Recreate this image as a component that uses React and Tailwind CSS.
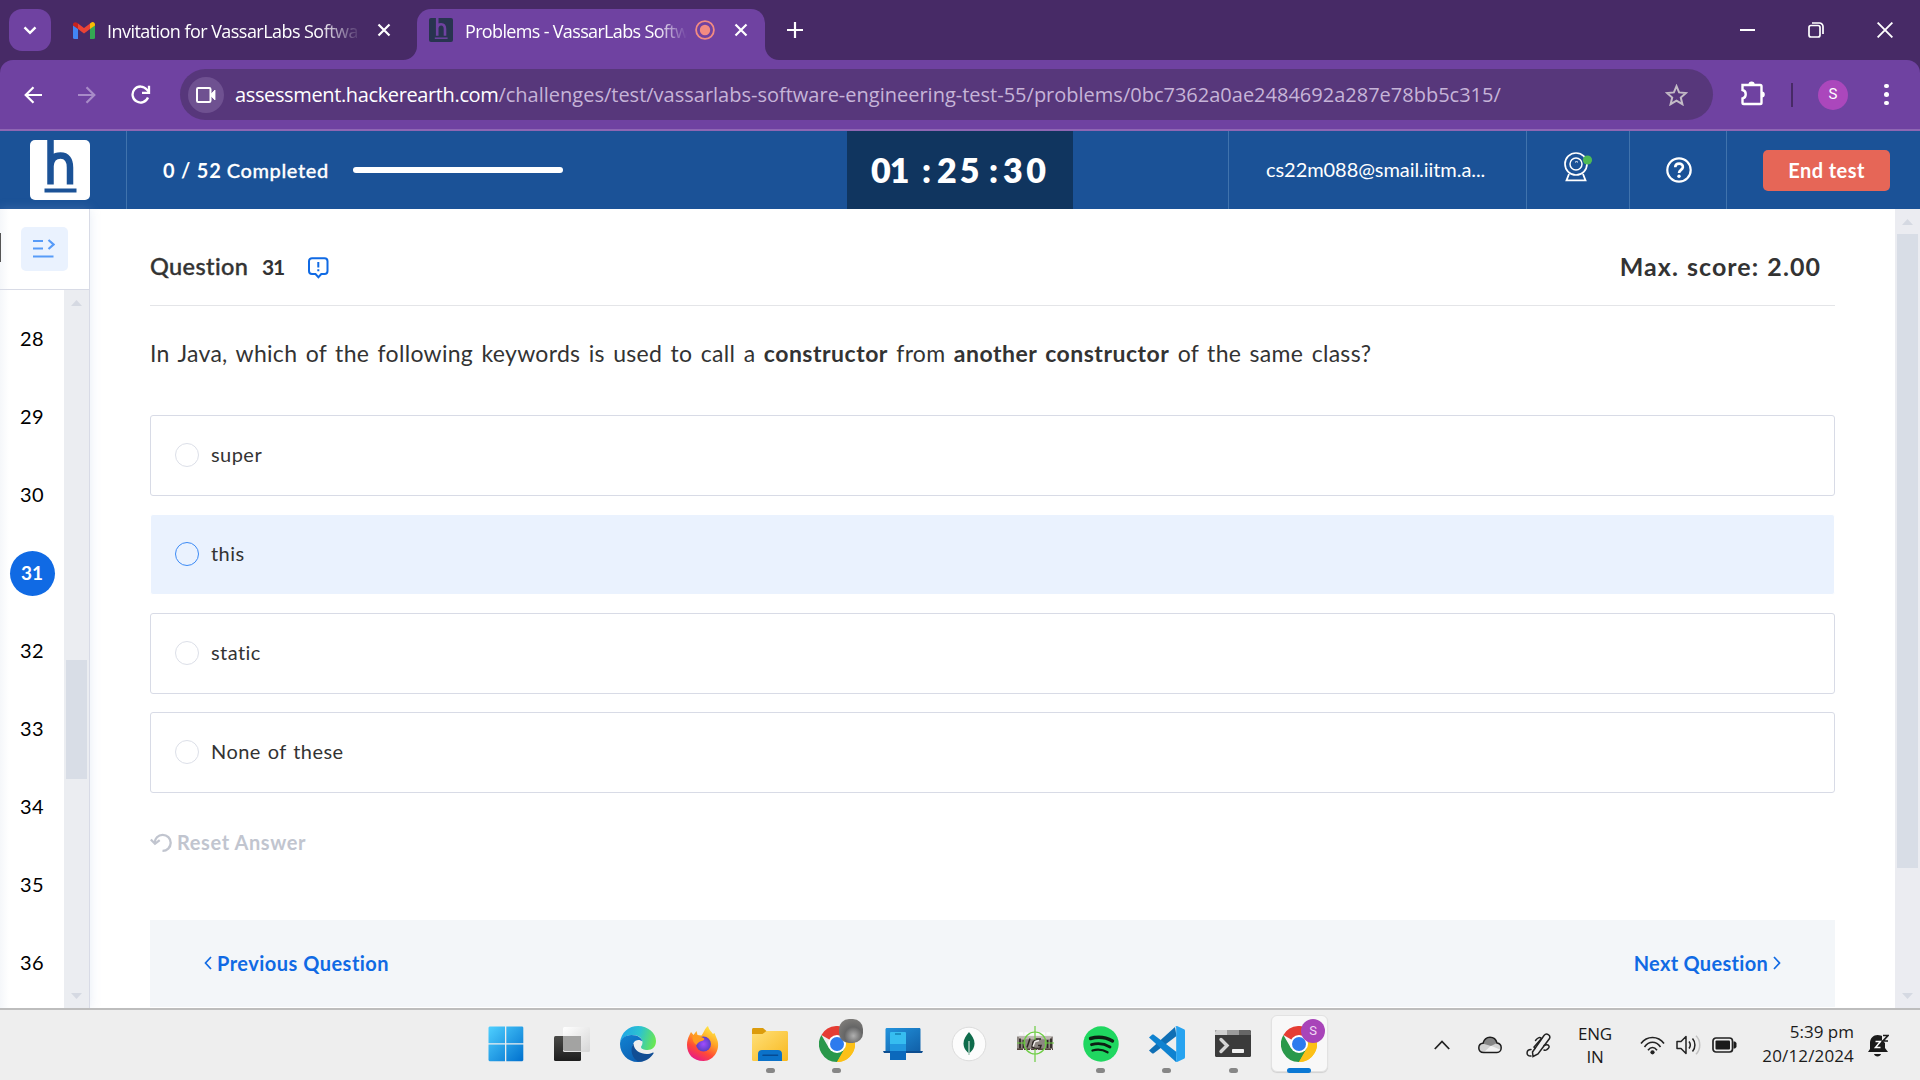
import React from "react";

/* ---------- browser chrome ---------- */

const GmailIcon = () => (
  <svg width="22" height="17" viewBox="0 0 22 17">
    <path d="M0 3 5 6.5V17H1.5A1.5 1.5 0 0 1 0 15.500Z" fill="#4285f4" />
    <path d="M22 3 17 6.500V17h3.500a1.500 1.500 0 0 0 1.500-1.500Z" fill="#34a853" />
    <path d="M17 1.500v5.500l5-3.500V2.500c0-2.200-2.400-3.200-4-1.800Z" fill="#fbbc04" />
    <path d="M5 7V1.500l6 4.500 6-4.500V7l-6 4.500Z" fill="#ea4335" />
    <path d="M0 2.500V3.500L5 7V1.500L4 .7C2.400-.5 0 .3 0 2.500Z" fill="#c5221f" />
  </svg>
);

const CloseIcon = ({ className }) => (
  <svg className={className} width="14" height="14" viewBox="0 0 14 14" stroke="#fff" strokeWidth="2.2">
    <path d="M1.500 1.500l11 11M12.500 1.500l-11 11" />
  </svg>
);

const HLogo = ({ w, h, bg, fg }) => (
  <svg width={w} height={h} viewBox="0 0 60 60" preserveAspectRatio="none">
    <rect width="60" height="60" rx="5" fill={bg} />
    <path d="M20.500 0v44.500M20.500 26C21 18 25 15.500 30.500 15.500c6.500 0 9.500 4.500 9.500 12v17" fill="none" stroke={fg} strokeWidth="6.500" />
    <path d="M14.500 50.500h32" stroke={fg} strokeWidth="3.800" />
  </svg>
);

function TabStrip() {
  return (
    <div className="flex h-[60px] bg-[#472a66]">
      <div className="ml-[9px] mt-[9px] flex h-[42px] w-[42px] items-center justify-center rounded-[13px] bg-[#6f42a1]">
        <svg width="14" height="9" viewBox="0 0 14 9" fill="none" stroke="#fff" strokeWidth="2.400"><path d="M1.500 1.300 7 6.800l5.500-5.500" /></svg>
      </div>
      <div className="ml-[22px] flex w-[319px] items-center">
        <GmailIcon />
        <span className="ml-[12px] w-[252px] overflow-hidden whitespace-nowrap pt-[3px] text-[18px] tracking-[-0.55px] text-white [mask-image:linear-gradient(to_right,#000_84%,transparent_101%)]">Invitation for VassarLabs Softwa</span>
        <CloseIcon className="ml-[18px]" />
      </div>
      <div className="relative ml-[25px] mt-[9px] flex h-[51px] w-[348px] items-center rounded-t-[14px] bg-[#6f42a1] pb-[9px] pl-[12px]">
        <svg className="absolute bottom-0 -left-[14px]" width="14" height="14" viewBox="0 0 14 14"><path d="M14 0v14H0A14 14 0 0 0 14 0Z" fill="#6f42a1" /></svg>
        <svg className="absolute bottom-0 -right-[14px]" width="14" height="14" viewBox="0 0 14 14"><path d="M0 0v14h14A14 14 0 0 1 0 0Z" fill="#6f42a1" /></svg>
        <HLogo w={24} h={24} bg="#28344f" fg="#6f42a1" />
        <span className="ml-[12px] w-[222px] overflow-hidden whitespace-nowrap pt-[3px] text-[18px] tracking-[-0.66px] text-white [mask-image:linear-gradient(to_right,#000_86%,transparent_100%)]">Problems - VassarLabs Softw</span>
        <svg className="ml-[8px] shrink-0" width="20" height="20" viewBox="0 0 20 20"><circle cx="10" cy="10" r="8.900" fill="none" stroke="#f28b82" strokeWidth="1.800" /><circle cx="10" cy="10" r="5.200" fill="#f28b82" /></svg>
        <CloseIcon className="ml-[19px] shrink-0" />
      </div>
      <svg className="ml-[22px] mt-[22px]" width="16" height="16" viewBox="0 0 16 16" stroke="#fff" strokeWidth="2.200"><path d="M8 0v16M0 8h16" /></svg>
      <div className="ml-auto mr-[27px] flex items-center">
        <svg width="15" height="2" viewBox="0 0 15 2"><path d="M0 1h15" stroke="#fff" strokeWidth="2" /></svg>
        <svg className="ml-[53px]" width="16" height="16" viewBox="0 0 16 16" fill="none" stroke="#fff" strokeWidth="1.700"><rect x="1" y="3.500" width="11" height="11.500" rx="2" /><path d="M4 1h7.500A3.500 3.500 0 0 1 15 4.500V12" /></svg>
        <svg className="ml-[53px]" width="16" height="16" viewBox="0 0 16 16" stroke="#fff" strokeWidth="1.900"><path d="M.6.600l14.800 14.800M15.400.600.6 15.400" /></svg>
      </div>
    </div>
  );
}

function Toolbar() {
  return (
    <div className="bg-[#472a66]">
      <div className="flex h-[71px] items-center rounded-t-[13px] border-b-2 border-[#8e66b3] bg-[#6f42a1] text-white">
        <svg className="ml-[24px]" width="18" height="18" viewBox="0 0 18 18" fill="none" stroke="#fff" strokeWidth="2.200"><path d="M18 9H2M9.500 1.200 1.700 9l7.800 7.800" /></svg>
        <svg className="ml-[36px]" width="18" height="18" viewBox="0 0 18 18" fill="none" stroke="#a88bc8" strokeWidth="2.200"><path d="M0 9h16M8.500 1.200 16.300 9l-7.800 7.800" /></svg>
        <svg className="ml-[35px]" width="20" height="20" viewBox="0 0 20 20" fill="none" stroke="#fff" strokeWidth="2.300"><path d="M17 12.500A8 8 0 1 1 15.800 4.500L18 7" /><path d="M18 .8V7.800h-7" /></svg>
        <div className="ml-[29px] flex h-[51px] w-[1533px] items-center rounded-full bg-[#57377b] pl-[8px] pr-[25px]">
          <div className="flex h-[36px] w-[36px] items-center justify-center rounded-full bg-[#6f5191]">
            <svg width="20" height="16" viewBox="0 0 20 16"><rect x="1" y="1" width="13.500" height="14" rx="1.200" fill="none" stroke="#fff" strokeWidth="2" /><path d="M14 8 19 3v10Z" fill="#fff" stroke="#fff" strokeWidth=".8" /></svg>
          </div>
          <div className="ml-[11px] flex whitespace-nowrap text-[20px]">
            <span className="tracking-[-0.37px]">assessment.hackerearth.com</span>
            <span className="text-[#c6b4d8]">/challenges/test/vassarlabs-software-engineering-test-55/problems/0bc7362a0ae2484692a287e78bb5c315/</span>
          </div>
          <svg className="ml-auto" width="23" height="22" viewBox="0 0 23 22" fill="none" stroke="#c3bbc6" strokeWidth="2"><path d="M11.500 2.200l2.600 6.200 6.900.6-5.200 4.500 1.600 6.700-5.900-3.600-5.900 3.600 1.600-6.700L2 9l6.900-.6Z" /></svg>
        </div>
        <svg className="mb-[3px] ml-[27px]" width="27" height="26" viewBox="0 0 27 26"><path d="M2.500 5h17.700c.8 0 1.300.5 1.300 1.300v16.400c0 .8-.5 1.300-1.300 1.300H3.800c-.8 0-1.300-.5-1.300-1.300v-4.300c4.300-.8 4.300-7.600 0-8.400Z" fill="none" stroke="#fff" strokeWidth="2.400" /><path d="M8.500 4.500a3.100 3.100 0 0 1 6.200 0ZM21.800 11.500a3 3 0 0 1 0 6Z" fill="#fff" /></svg>
        <div className="ml-[24px] h-[24px] w-[2px] bg-[#472a66]" />
        <div className="ml-[25px] flex h-[30px] w-[30px] items-center justify-center rounded-full bg-[#ab47bc] font-[Roboto] text-[15px]">S</div>
        <div className="ml-[36px] flex flex-col gap-[4px]">
          <i className="h-[4.500px] w-[5px] rounded-full bg-white" />
          <i className="h-[4.500px] w-[5px] rounded-full bg-white" />
          <i className="h-[4.500px] w-[5px] rounded-full bg-white" />
        </div>
      </div>
    </div>
  );
}

/* ---------- assessment page ---------- */

function TestHeader() {
  return (
    <header className="flex h-[78px] shrink-0 items-stretch bg-[#1b5297] font-[Lato,sans-serif] text-white">
      <div className="flex w-[127px] items-start border-r border-[#4073ad] pl-[30px] pt-[9px]"><HLogo w={60} h={60} bg="#fff" fg="#1b5297" /></div>
      <div className="flex w-[720px] items-center pl-[36px] text-[20px]">
        <span className="w-[166px] whitespace-nowrap pb-[1px]"><span className="font-bold tracking-[0.8px]">0 / 52</span> <span className="font-medium tracking-[0.6px] [-webkit-text-stroke:0.3px_white]">Completed</span></span>
        <div className="ml-[24px] h-[6px] w-[210px] rounded-full bg-white" />
      </div>
      <div className="flex w-[226px] items-center bg-[#10355f] pb-[2px] pl-[24px] text-[34px] font-extrabold">
        <span className="w-[51px] tracking-[-1px]">01</span>
        <span className="w-[15px]">:</span>
        <span className="w-[52px] tracking-[3px]">25</span>
        <span className="w-[14px]">:</span>
        <span className="tracking-[3.500px]">30</span>
      </div>
      <div className="w-[156px] border-r border-[#4073ad]" />
      <div className="flex w-[298px] items-center border-r border-[#4073ad] pb-[3px] pl-[37px] text-[20px] tracking-[-0.06px]">cs22m088@smail.iitm.a...</div>
      <div className="flex w-[103px] items-start border-r border-[#4073ad] pl-[36px] pt-[20px]">
        <svg width="30" height="32" viewBox="0 0 30 32" fill="none" stroke="#fff">
          <circle cx="13" cy="13" r="11" strokeWidth="1.700" /><circle cx="13" cy="13" r="6" strokeWidth="1.500" />
          <path d="M12 11.200q1.600-1.200 3 0" strokeWidth="1" />
          <path d="M6 23 3.500 29.300h19L20 23" strokeWidth="1.800" />
          <circle cx="24.500" cy="9" r="4.600" fill="#4fba55" stroke="none" />
        </svg>
      </div>
      <div className="flex w-[97px] items-center border-r border-[#4073ad] pl-[36px]">
        <svg width="26" height="26" viewBox="0 0 26 26" fill="none" stroke="#fff"><circle cx="13" cy="13" r="11.700" strokeWidth="2.200" /><path d="M9.200 10.300c.2-5 7.900-4.700 7.700-.2-.2 2.800-3.700 2.800-3.900 5.900" strokeWidth="2.600" /><circle cx="13" cy="19.300" r="1.700" fill="#fff" stroke="none" /></svg>
      </div>
      <div className="flex items-center pl-[36px]">
        <div className="flex h-[41px] w-[127px] items-center justify-center rounded-[5px] bg-[#e66657] text-[20px] font-bold tracking-[0.45px]">End test</div>
      </div>
    </header>
  );
}

const Tri = ({ down }) => (
  <svg width="11" height="6" viewBox="0 0 11 6"><path d={down ? "M0 0h11L5.500 6Z" : "M0 6h11L5.500 0Z"} fill="#d5d9e2" /></svg>
);

function Rail() {
  return (
    <aside className="flex w-[90px] shrink-0 flex-col border-r border-[#d8dbe6] bg-white bg-[linear-gradient(to_right,#f5f7fa,#fff_9px)] shadow-[0_0_10px_rgba(160,185,220,0.250)]">
      <div className="flex h-[81px] items-start border-b border-[#d8dbe6]">
        <div className="mt-[24px] h-[29px] w-[1px] bg-[#555]" />
        <div className="ml-[20px] mt-[18px] flex h-[44px] w-[47px] items-center rounded-[5px] bg-[#eaf2fe] pb-[2px] pl-[12px]">
          <svg width="22" height="20" viewBox="0 0 22 20" fill="none" stroke="#579bf8" strokeWidth="2.200"><path d="M0 3h10M0 10.500h10M0 18.500h20.500M15.500 2l5 4.500-5 4.500" /></svg>
        </div>
      </div>
      <div className="flex min-h-0 flex-1 overflow-hidden">
        <div className="flex w-[64px] flex-col items-center pt-[10px] font-[Lato,sans-serif] text-[20px] text-black">
          {[28, 29, 30, 31, 32, 33, 34, 35, 36].map((n) => (
            <div key={n} className="flex h-[78px] shrink-0 items-center">
              {n === 31 ? (
                <div className="flex h-[45px] w-[45px] items-center justify-center rounded-full bg-[#106ae4] text-[19px] font-bold text-white">31</div>
              ) : (
                <span className="pb-[2px] tracking-[0.5px]">{n}</span>
              )}
            </div>
          ))}
        </div>
        <div className="flex w-[25px] flex-col items-center bg-[#ebedf1] pb-[9px] pt-[10px]">
          <Tri />
          <div className="mt-[354px] h-[119px] w-[21px] bg-[#d8dde6]" />
          <div className="mt-auto"><Tri down /></div>
        </div>
      </div>
    </aside>
  );
}

const OPTIONS = ["super", "this", "static", "None of these"];

function Question() {
  return (
    <main className="flex min-w-0 flex-1 flex-col pl-[60px] pr-[60px] font-[Lato,sans-serif] text-[#333]">
      <div className="flex h-[97px] items-center border-b border-[#e4e5e8] pt-[20px]">
        <span className="w-[112px] pb-[1px] text-[23.500px] font-medium tracking-[0.4px] [-webkit-text-stroke:0.4px_#333]">Question</span>
        <span className="w-[46px] pb-[1px] text-[21px] font-bold tracking-[-1.200px]">31</span>
        <svg className="mt-[1px]" width="21" height="22" viewBox="0 0 21 22" fill="none" stroke="#106ae4" strokeWidth="2"><path d="M4 1.200h12.500a3 3 0 0 1 3 3V14a3 3 0 0 1-3 3h-3.200l-2.900 3.200L7.500 17H4a3 3 0 0 1-3-3V4.200a3 3 0 0 1 3-3Z" /><path d="M10.300 5v5.500M10.300 12.300v2" /></svg>
        <span className="ml-auto mr-[14px] pb-[1px] text-[25px] font-bold tracking-[1.050px] [word-spacing:1px]">Max. score: 2.00</span>
      </div>
      <p className="mt-[29px] h-[36px] whitespace-nowrap text-[23px] leading-[36px] tracking-[0.3px] [word-spacing:2.200px]">
        In Java, which of the following keywords is used to call a <b className="tracking-[0.5px]">constructor</b> from <b className="tracking-[0.5px]">another constructor</b> of the same class?
      </p>
      <div className="mt-[44px] flex flex-col gap-[18px]">
        {OPTIONS.map((o) => (
          <div key={o} className={o === "this" ? "flex h-[81px] items-center rounded-[3px] border border-white bg-[#eaf2fe] pb-[2px] pl-[24px]" : "flex h-[81px] items-center rounded-[3px] border border-[#d8dbe6] bg-white pb-[2px] pl-[24px]"}>
            <i className={o === "this" ? "h-[24px] w-[24px] rounded-full border border-[#3b8af5]" : "h-[24px] w-[24px] rounded-full border border-[#dcdfe8]"} />
            <span className="ml-[12px] pb-[1px] text-[20px] tracking-[0.450px] [word-spacing:1.300px]">{o}</span>
          </div>
        ))}
      </div>
      <div className="mt-[33px] flex h-[32px] items-center text-[20px] font-bold tracking-[0.6px] text-[#c1c5cf]">
        <svg width="22" height="19" viewBox="0 0 22 19" fill="none" stroke="#c1c5cf" strokeWidth="2.300"><path d="M4.700 10A8 8 0 1 1 12.500 17.800" /><path d="M.8 6.500 5 10.800l4.700-3.600" /></svg>
        <span className="ml-[5px] pb-[1px]">Reset Answer</span>
      </div>
      <div className="mb-[1px] mt-[62px] flex flex-1 items-center justify-between bg-[#f3f6f9] px-[54px] pb-[2px] text-[20px] font-bold text-[#106ae4]">
        <span className="flex items-center gap-[5px] tracking-[0.48px]"><svg width="8" height="14" viewBox="0 0 8 14" fill="none" stroke="#106ae4" strokeWidth="1.700"><path d="M7 1 1.500 7 7 13" /></svg>Previous Question</span>
        <span className="flex items-center gap-[5px] tracking-[0.3px]">Next Question<svg width="8" height="14" viewBox="0 0 8 14" fill="none" stroke="#106ae4" strokeWidth="1.700"><path d="m1 1 5.500 6L1 13" /></svg></span>
      </div>
    </main>
  );
}

function PageScrollbar() {
  return (
    <div className="flex w-[25px] flex-col items-center bg-[#ebecf1] pb-[9px] pt-[10px]">
      <Tri />
      <div className="mt-[9px] h-[634px] w-[21px] bg-[#d8dde6]" />
      <div className="mt-auto"><Tri down /></div>
    </div>
  );
}

/* ---------- taskbar ---------- */

const WindowsIcon = () => (
  <svg width="36" height="36" viewBox="0 0 36 36">
    <defs><linearGradient id="win" x1="0" y1="0" x2="1" y2="1"><stop offset="0" stopColor="#4fd0ff" /><stop offset="1" stopColor="#0070ce" /></linearGradient></defs>
    <path d="M1.500.500H17v16.800H.500V1.500ZM18.300.500H34.500l.8 1v15.800h-17ZM.500 18.500H17V35.300H1.500l-1-1ZM18.300 18.500h17v15.800l-1 1h-16Z" fill="url(#win)" />
  </svg>
);

const TaskViewIcon = () => (
  <svg width="36" height="36" viewBox="0 0 36 36">
    <defs>
      <linearGradient id="tv1" x1="0" y1="0" x2="0" y2="1"><stop offset="0" stopColor="#4a4a48" /><stop offset="1" stopColor="#1d1d1d" /></linearGradient>
      <linearGradient id="tv2" x1="0" y1="0" x2="1" y2="1"><stop offset="0" stopColor="#fff" /><stop offset="1" stopColor="#d6d6d6" /></linearGradient>
    </defs>
    <rect x="0" y="10" width="27" height="25" rx="1.500" fill="url(#tv1)" />
    <rect x="9" y="1" width="27" height="25" rx="1.500" fill="url(#tv2)" />
    <path d="M9 10h18v15H10.500L9 24Z" fill="#a3a3a2" />
  </svg>
);

const EdgeIcon = () => (
  <svg width="36" height="36" viewBox="0 0 36 36">
    <defs>
      <linearGradient id="ed1" x1="0" y1="0.400" x2="1" y2="0.600"><stop offset="0" stopColor="#1fa5e8" /><stop offset=".5" stopColor="#2cc3d0" /><stop offset="1" stopColor="#6be84f" /></linearGradient>
      <linearGradient id="ed2" x1="0" y1="0" x2="0.600" y2="1"><stop offset="0" stopColor="#1283d2" /><stop offset="1" stopColor="#0c60b3" /></linearGradient>
    </defs>
    <path d="M0 17C1 6 9 0 18 0c10 0 18 7 18 15 0 6-4 9-8.500 9-4 0-6.500-1.400-6.500-3 0-1 1.500-1.800 1.500-4.500C22.500 12 18.500 9 12.500 9 6 9 1.500 12.500 0 17Z" fill="url(#ed1)" />
    <path d="M0 18c0-5 5-9 11.500-9C18.500 9 22.300 12.500 22.300 15.500c-2-2-7-2.500-9 2C11 23 14 32 24 34.800 21 36 19 36 17.500 36 8 36 0 28 0 18Z" fill="url(#ed2)" />
    <path d="M13.500 17.500C9.500 22.500 11.500 34 20 35.800c5.500-.3 11-4 13.500-8.300.4-.8-.3-1.200-1-.8C27 29.500 14 28 13.500 17.500Z" fill="#114d94" />
  </svg>
);

const FirefoxIcon = () => (
  <svg width="36" height="36" viewBox="0 0 36 36">
    <defs>
      <linearGradient id="ff1" x1="0.800" y1="0" x2="0.300" y2="1"><stop offset="0" stopColor="#fff04a" /><stop offset=".4" stopColor="#ffa324" /><stop offset=".7" stopColor="#ff4a36" /><stop offset="1" stopColor="#e6178c" /></linearGradient>
      <radialGradient id="ff2"><stop offset="0" stopColor="#a04cff" /><stop offset="1" stopColor="#5b3fc4" /></radialGradient>
    </defs>
    <path d="M3.500 9 5 6l2.500 3 3-4 1 4 4 .5c2-2 3-7 6.500-9.500 1 4 3 5 5 8l1.500-1 2 5c5 10-2 23-13 23C7 35 1 28 1 19c0-4 1-7 2.500-10Z" fill="url(#ff1)" />
    <circle cx="17.500" cy="18" r="7.500" fill="url(#ff2)" />
    <path d="M6.500 9.500c4-1.500 7 1 11 2.500 1.500.8 1 2.500-2 3-3 .5-4 2.500-5 4-3-2-4.500-5-4-9.500Z" fill="#ff9a1f" />
  </svg>
);

const FolderIcon = () => (
  <svg width="36" height="36" viewBox="0 0 36 36">
    <defs><linearGradient id="fo" x1="0" y1="0" x2="1" y2="1"><stop offset="0" stopColor="#ffe079" /><stop offset="1" stopColor="#f8b81e" /></linearGradient></defs>
    <path d="M0 3.500C0 2.600.6 2 1.500 2h9.500l4 3.500L11 9H0Z" fill="#dc9c0c" />
    <path d="M0 8h10.500l4-3H34.500c.9 0 1.500.6 1.500 1.500v27c0 .9-.6 1.500-1.500 1.500h-33C.6 35 0 34.400 0 33.500Z" fill="url(#fo)" />
    <path d="M6 35v-7c0-2.500 1.500-4 4-4h16c2.500 0 4 1.500 4 4v7Z" fill="#0b72c9" />
    <path d="M11 29.300h14.500" stroke="#064b93" strokeWidth="1.600" strokeLinecap="round" />
  </svg>
);

const ChromeIcon = ({ children }) => (
  <div className="relative h-[36px] w-[36px]">
    <svg width="36" height="36" viewBox="0 0 36 36">
      <path d="M18 18 2.400 9A18 18 0 0 1 33.600 9Z" fill="#e53c33" />
      <path d="M18 18 33.600 9A18 18 0 0 1 18 36Z" fill="#fcc017" />
      <path d="M2.400 9A18 18 0 0 0 18 36L25.800 22.500 10.200 22.500Z" fill="#29984a" />
      <path d="M18 9H33.600L25.800 22.500 18 36c10 0 18-8 18-18 0-3.300-.9-6.400-2.400-9Z" fill="#fcc017" />
      <circle cx="18" cy="18" r="9" fill="#fff" /><circle cx="18" cy="18" r="7" fill="#2d7bee" />
    </svg>
    {children}
  </div>
);

const LinkIcon = () => (
  <svg width="40" height="36" viewBox="0 0 40 36">
    <defs><linearGradient id="pl" x1="0" y1="0" x2="1" y2="1"><stop offset="0" stopColor="#2293dd" /><stop offset="1" stopColor="#1160a8" /></linearGradient></defs>
    <path d="M4 2h32c1.200 0 1.500.5 1.500 1.500V25h-35V3.500C2.500 2.500 3 2 4 2Z" fill="url(#pl)" />
    <path d="M0 25h40l-1 2H1Z" fill="#0d4d8f" />
    <rect x="7" y="6" width="16" height="28" rx="1" fill="#36bdf0" />
    <path d="M7 18h16v7H7Z" fill="#2198df" /><path d="M7 25h16v9H7Z" fill="#0b69bc" /><path d="M12 8h6" stroke="#1583b5" strokeWidth="1.500" />
  </svg>
);

const MongoIcon = () => (
  <svg width="36" height="36" viewBox="0 0 36 36">
    <circle cx="18" cy="18" r="16.800" fill="#fcfcfc" stroke="#dcdcdc" strokeWidth="1" />
    <path d="M18 6c3 3.500 5.500 7 5.500 11.500S21 25 18.500 27h-1C15 25 12.500 22 12.500 17.500S15 9.500 18 6Z" fill="#0e6b4b" />
    <path d="M18 15v14" stroke="#a9c9bb" strokeWidth="1.500" />
  </svg>
);

const IgiIcon = () => (
  <svg width="38" height="36" viewBox="0 0 38 36">
    <path d="M3 7.500h32" stroke="#fafafa" strokeWidth="2.500" strokeDasharray="4 1.500" />
    <path d="M1 10.500h36v12.500H1Z" fill="#8d8681" />
    <path d="M3 12h32" stroke="#bcb5b0" strokeWidth="2.500" />
    <path d="M4 22.500V12.500M7.500 14v8M31.500 14v8M35 22V12.500" stroke="#2d2724" strokeWidth="1.800" fill="none" />
    <path d="M14 12.500l-3 9M25 13h-5l-3 3-1 5 3 1.500h5l1-3h-3" stroke="#2d2724" strokeWidth="1.500" fill="none" />
    <path d="M17 20.500l2-5 4-1" stroke="#f2efed" strokeWidth="1.400" fill="none" />
    <path d="M1 23.300h36" stroke="#56473f" strokeWidth="1.500" strokeDasharray="6 1" />
    <circle cx="19" cy="17" r="11" fill="none" stroke="#6ccd42" strokeWidth="1.200" />
    <path d="M19 0v14M19 23v13M1 17h9M28 17h10" stroke="#6ccd42" strokeWidth="1.200" />
  </svg>
);

const SpotifyIcon = () => (
  <svg width="36" height="36" viewBox="0 0 36 36" fill="none" stroke="#0d1f13" strokeLinecap="round">
    <circle cx="18" cy="18" r="17.700" fill="#1fd760" stroke="none" />
    <path d="M7.500 12.500c7-2 15.500-1.200 22 2.500" strokeWidth="3.400" /><path d="M8.500 18.700c6-1.700 13-.9 18.500 2.300" strokeWidth="2.800" /><path d="M9.500 24.500c5-1.400 10.500-.8 15 1.800" strokeWidth="2.300" />
  </svg>
);

const VsCodeIcon = () => (
  <svg width="36" height="36" viewBox="0 0 36 36">
    <path d="M26 1 0 24.500l3 2.800c.6.400 1.200.4 1.800 0L27.500 10Z" fill="#0f6fb5" />
    <path d="M27 36 0 11.500l3-2.800c.6-.4 1.200-.4 1.800 0L27.500 26Z" fill="#0f82d0" />
    <path d="M26 .500 28 0l7 3.300c.6.300 1 .8 1 1.500v26.400c0 .7-.4 1.200-1 1.500L28 36l-2-.5c.8 0 1.200-.7 1.200-1.500V2c0-.8-.4-1.500-1.200-1.500Z" fill="#27a3f0" />
  </svg>
);

const TerminalIcon = () => (
  <svg width="36" height="36" viewBox="0 0 36 36">
    <rect x="0" y="4" width="36" height="27" rx="1.500" fill="#3b3b3b" />
    <path d="M1.500 4H12v5H0V5.500Z" fill="#cfcfcf" /><path d="M12 4h12v5H12Z" fill="#9b9b9b" /><path d="M24 4h10.500L36 5.500V9H24Z" fill="#666" />
    <path d="M6 13.500 12 19.500 6 25.500" fill="none" stroke="#d4d4d4" strokeWidth="3.400" strokeLinecap="round" /><rect x="17" y="23" width="12" height="4" rx=".8" fill="#f0f0f0" />
  </svg>
);

const APPS = [
  { icon: <WindowsIcon /> },
  { icon: <TaskViewIcon /> },
  { icon: <EdgeIcon /> },
  { icon: <FirefoxIcon /> },
  { icon: <FolderIcon />, open: true },
  { icon: <ChromeIcon><i className="absolute -right-[8px] -top-[7px] h-[24px] w-[24px] rounded-[10px] bg-[radial-gradient(circle_at_60%_70%,#b0b0b0,#666_40%,#8a8783)]" /></ChromeIcon>, open: true },
  { icon: <LinkIcon /> },
  { icon: <MongoIcon /> },
  { icon: <IgiIcon /> },
  { icon: <SpotifyIcon />, open: true },
  { icon: <VsCodeIcon />, open: true },
  { icon: <TerminalIcon />, open: true },
  { icon: <ChromeIcon><span className="absolute -right-[8px] -top-[7px] flex h-[24px] w-[24px] items-center justify-center rounded-full bg-[#a844b9] font-[Roboto] text-[13px] text-[#f0d9f4]">S</span></ChromeIcon>, active: true },
];

function Tray() {
  return (
    <div className="flex items-center text-[#1b1b1b]">
      <svg width="16" height="10" viewBox="0 0 16 10" fill="none" stroke="#222" strokeWidth="1.800"><path d="M.800 9 8 1.500 15.200 9" /></svg>
      <svg className="ml-[28px]" width="24" height="18" viewBox="0 0 24 18"><path d="M5.500 16.500C2.500 16.500.8 14.500.8 12S2.500 7.500 5 7.300C6 3.500 8.500 1.200 12 1.200s6 2 7 5.800c2.500.3 4.200 2.200 4.200 4.700s-1.700 4.800-4.200 4.800Z" fill="#d2d2d2" /><path d="M4.500 7.500C6 3.500 8.500 1.200 12 1.200s6 2 7 5.800l-6 3Z" fill="#858585" /><path d="M13 9.700 23 14c-.6 1.500-2 2.500-4 2.500H5.500Z" fill="#f2f2f2" /><path d="M5.500 16.500C2.500 16.500.8 14.500.8 12S2.500 7.500 5 7.300C6 3.500 8.500 1.200 12 1.200s6 2 7 5.800c2.500.3 4.200 2.200 4.200 4.700s-1.700 4.800-4.200 4.800Z" fill="none" stroke="#1d1d1d" strokeWidth="1.500" /></svg>
      <svg className="ml-[24px]" width="25" height="25" viewBox="0 0 25 25" fill="none" stroke="#222" strokeWidth="1.500" strokeLinecap="round"><path d="M7 23.500 6.500 19 18 2.500c2.500-3 7-.5 5.500 3L12 21Z" /><path d="M9 15.500 8 14l7.500-8.500c-2-2-4-.5-6 2M5 16.500c-5 0-5.500 7 0 6.500M18 12.500c5-2 7 1.500 3 4-1.500 1.200-3 .5-3 .5" /></svg>
      <div className="ml-[26px] flex w-[36px] flex-col items-center text-[17px] leading-[23px] tracking-[-0.200px]"><span>ENG</span><span>IN</span></div>
      <svg className="ml-[27px]" width="25" height="19" viewBox="0 0 25 19" fill="none" stroke="#222" strokeWidth="1.600"><path d="M1 7.500C7-.500 18-.500 24 7.500M4.500 11c4.500-6.300 11.500-6.300 16 0M8 14.200c2.800-3.700 6.200-3.700 9 0" /><circle cx="12.500" cy="16.300" r="2.100" fill="#222" stroke="none" /></svg>
      <svg className="ml-[11px]" width="25" height="20" viewBox="0 0 25 20" fill="none" stroke="#222" strokeWidth="1.500"><path d="M1 6.500h4l5-5v17l-5-5H1Z" strokeLinejoin="round" /><path d="M13 6.500c1.500 2 1.500 5 0 7M16.500 3.500c3.200 3.500 3.200 9.500 0 13" /><path d="M20 .800c5 5 5 13.400 0 18.400" stroke="#c2c2c2" /></svg>
      <svg className="ml-[11px]" width="25" height="16" viewBox="0 0 25 16"><rect x="1" y="1" width="19.500" height="14" rx="3" fill="none" stroke="#222" strokeWidth="1.700" /><rect x="3.500" y="3.500" width="14.500" height="9" rx="1" fill="#1b1b1b" /><path d="M21.500 4.500h1.500l1.500 1.500v4L23 11.500h-1.500Z" fill="#1b1b1b" /></svg>
      <div className="ml-[25px] flex w-[92px] flex-col items-end whitespace-nowrap pb-[2px] text-[17px] leading-[24px]"><span>5:39 pm</span><span className="tracking-[0.150px]">20/12/2024</span></div>
      <svg className="ml-[14px]" width="21" height="23" viewBox="0 0 21 23"><path d="M2 15V9C2 4 5.500 1 9.500 1 12 1 14 2 14 2v4l3 3v5l3 4H0Z" fill="#1b1b1b" /><path d="M6 20h7c-.5 3.200-6.500 3.200-7 0Z" fill="#1b1b1b" /><path d="M7.500 7.500h5l-5 6h5" fill="none" stroke="#fff" strokeWidth="1.500" /><path d="M15 1.500h5l-5 5.500h5" fill="none" stroke="#1b1b1b" strokeWidth="1.700" /></svg>
    </div>
  );
}

function Taskbar() {
  return (
    <footer className="flex h-[72px] items-center border-t-2 border-[#bdbdbd] bg-[#eeeeee]">
      <div className="ml-[473px] flex h-full">
        {APPS.map((a, i) => (
          <div key={i} className="relative flex w-[66.100px] justify-center">
            <div className={a.active ? "mt-[5px] flex h-[57px] w-[57px] items-center justify-center rounded-[6px] border border-[#e2e2e2] bg-[#f8f8f8] shadow-[0_1px_1px_rgba(0,0,0,0.120)]" : "mt-[5px] flex h-[57px] w-[57px] items-center justify-center"}>{a.icon}</div>
            {a.open && <i className="absolute bottom-[7px] h-[5px] w-[9px] rounded-full bg-[#868686]" />}
            {a.active && <i className="absolute bottom-[7px] h-[5px] w-[24px] rounded-full bg-[#0a78d4]" />}
          </div>
        ))}
      </div>
      <div className="ml-auto mr-[31px]"><Tray /></div>
    </footer>
  );
}

export default function App() {
  return (
    <div className="flex h-[1080px] w-[1920px] flex-col overflow-hidden bg-white font-['Open_Sans',sans-serif]">
      <TabStrip />
      <Toolbar />
      <TestHeader />
      <div className="flex min-h-0 flex-1">
        <Rail />
        <Question />
        <PageScrollbar />
      </div>
      <Taskbar />
    </div>
  );
}
